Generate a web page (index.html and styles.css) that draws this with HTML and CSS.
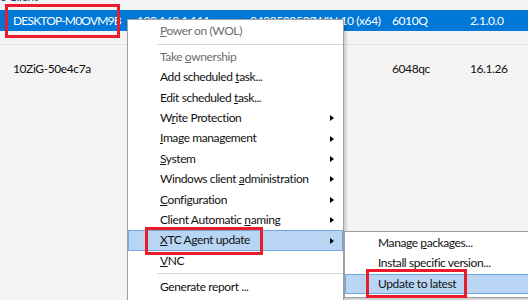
FILE: index.html
```html
<!DOCTYPE html>
<html>
<head>
<meta charset="utf-8">
<link rel="stylesheet" href="styles.css">
</head>
<body>
<div class="screen">
  <div class="caption">o Client</div>
  <div class="list">
    <div class="row selected">
      <span class="c-name">DESKTOP-M0OVM9B</span>
      <span class="c-ip">192.168.1.111</span>
      <span class="c-mac">0408523538</span>
      <span class="c-os">WIN 10 (x64)</span>
      <span class="c-model">6010Q</span>
      <span class="c-ver">2.1.0.0</span>
    </div>
    <div class="row-gap"></div>
    <div class="row">
      <span class="c-name">10ZiG-50e4c7a</span>
      <span class="c-ip"></span>
      <span class="c-mac"></span>
      <span class="c-os"></span>
      <span class="c-model">6048qc</span>
      <span class="c-ver">16.1.26</span>
    </div>
  </div>

  <div class="menu main-menu">
    <div class="item disabled"><span class="label"><u>P</u>ower on (WOL)</span></div>
    <div class="sep"></div>
    <div class="item disabled"><span class="label">Take <u>o</u>wnership</span></div>
    <div class="item"><span class="label">Add scheduled <u>t</u>ask...</span></div>
    <div class="item"><span class="label">Edit scheduled <u>t</u>ask...</span></div>
    <div class="item sub"><span class="label">W<u>r</u>ite Protection</span><span class="arrow"></span></div>
    <div class="item sub"><span class="label"><u>I</u>mage management</span><span class="arrow"></span></div>
    <div class="item sub"><span class="label"><u>S</u>ystem</span><span class="arrow"></span></div>
    <div class="item sub"><span class="label">Windows client <u>a</u>dministration</span><span class="arrow"></span></div>
    <div class="item sub"><span class="label"><u>C</u>onfiguration</span><span class="arrow"></span></div>
    <div class="item sub"><span class="label">Client Automatic <u>n</u>aming</span><span class="arrow"></span></div>
    <div class="item sub active"><span class="label"><u>X</u>TC Agent update</span><span class="arrow"></span></div>
    <div class="item"><span class="label"><u>V</u>NC</span></div>
    <div class="sep"></div>
    <div class="item"><span class="label">Generate report ...</span></div>
  </div>

  <div class="menu sub-menu">
    <div class="item"><span class="label">Manage <u>p</u>ackages...</span></div>
    <div class="item"><span class="label">Install specific version...</span></div>
    <div class="item active"><span class="label">Update to latest</span></div>
  </div>

  <div class="mark mark-device"></div>
  <div class="mark mark-xtc"></div>
  <div class="mark mark-update"></div>
</div>
</body>
</html>
```

FILE: styles.css
```css
* { box-sizing: border-box; }
html, body {
  margin: 0;
  padding: 0;
  width: 528px;
  height: 300px;
  overflow: hidden;
  background: #f4f4f4;
}
.screen {
  position: relative;
  width: 528px;
  height: 300px;
  overflow: hidden;
  font-family: Lato, "Noto Sans", sans-serif;
  font-size: 12px;
  letter-spacing: -0.4px;
  color: #111;
}
.caption {
  height: 10px;
  line-height: 12px;
  margin-top: -9px;
  padding-left: 0;
  color: #1f3a63;
  margin-bottom: 9px;
}
.list {
  display: flex;
  flex-direction: column;
}
.row {
  display: grid;
  grid-template-columns: 124px 113px 64px 78px 78px 1fr;
  padding-left: 13px;
  height: 21px;
  line-height: 21px;
  white-space: nowrap;
}
.row.selected {
  background: #0078d7;
  color: #fff;
}
.row.selected .c-name { letter-spacing: -0.8px; }
.row-gap {
  height: 14px;
  border-bottom: 1px solid #dbe4ee;
}
.row:not(.selected) {
  margin-top: 13px;
}

.menu {
  position: absolute;
  background: #fff;
  border: 1px solid #a0a0a0;
  box-shadow: 2px 2px 3px rgba(0,0,0,0.18);
  padding: 1px 0;
}
.main-menu {
  left: 127px;
  top: 19px;
  width: 217px;
  height: 300px;
}
.sub-menu {
  left: 344px;
  top: 231px;
  width: 186px;
  height: 67px;
}
.item {
  position: relative;
  height: 20.4px;
  line-height: 20.4px;
  padding-left: 32px;
  display: flex;
  align-items: center;
  white-space: nowrap;
}
.item .label { flex: 1; }
.item.disabled { color: #6d6d6d; }
.item.active {
  background: #b8d6f4;
  border: 1px solid #72a8e0;
  padding-left: 31px;
}
.sub-menu .item { padding-left: 33px; }
.sub-menu .item.active { padding-left: 32px; }
.arrow {
  width: 0;
  height: 0;
  border-top: 3.5px solid transparent;
  border-bottom: 3.5px solid transparent;
  border-left: 4px solid #000;
  margin-right: 9px;
}
.item.active .arrow { margin-right: 8px; }
.sep {
  height: 5.5px;
  margin-left: 29px;
  display: flex;
  align-items: center;
}
.sep::before {
  content: "";
  flex: 1;
  height: 1px;
  background: #d7d7d7;
}

.mark {
  position: absolute;
  border: 3px solid #ea1c2b;
}
.mark-device { left: 5px; top: 4px; width: 115px; height: 34px; }
.mark-xtc { left: 145px; top: 227px; width: 118px; height: 28px; }
.mark-update { left: 366px; top: 269px; width: 101px; height: 29px; }
```
